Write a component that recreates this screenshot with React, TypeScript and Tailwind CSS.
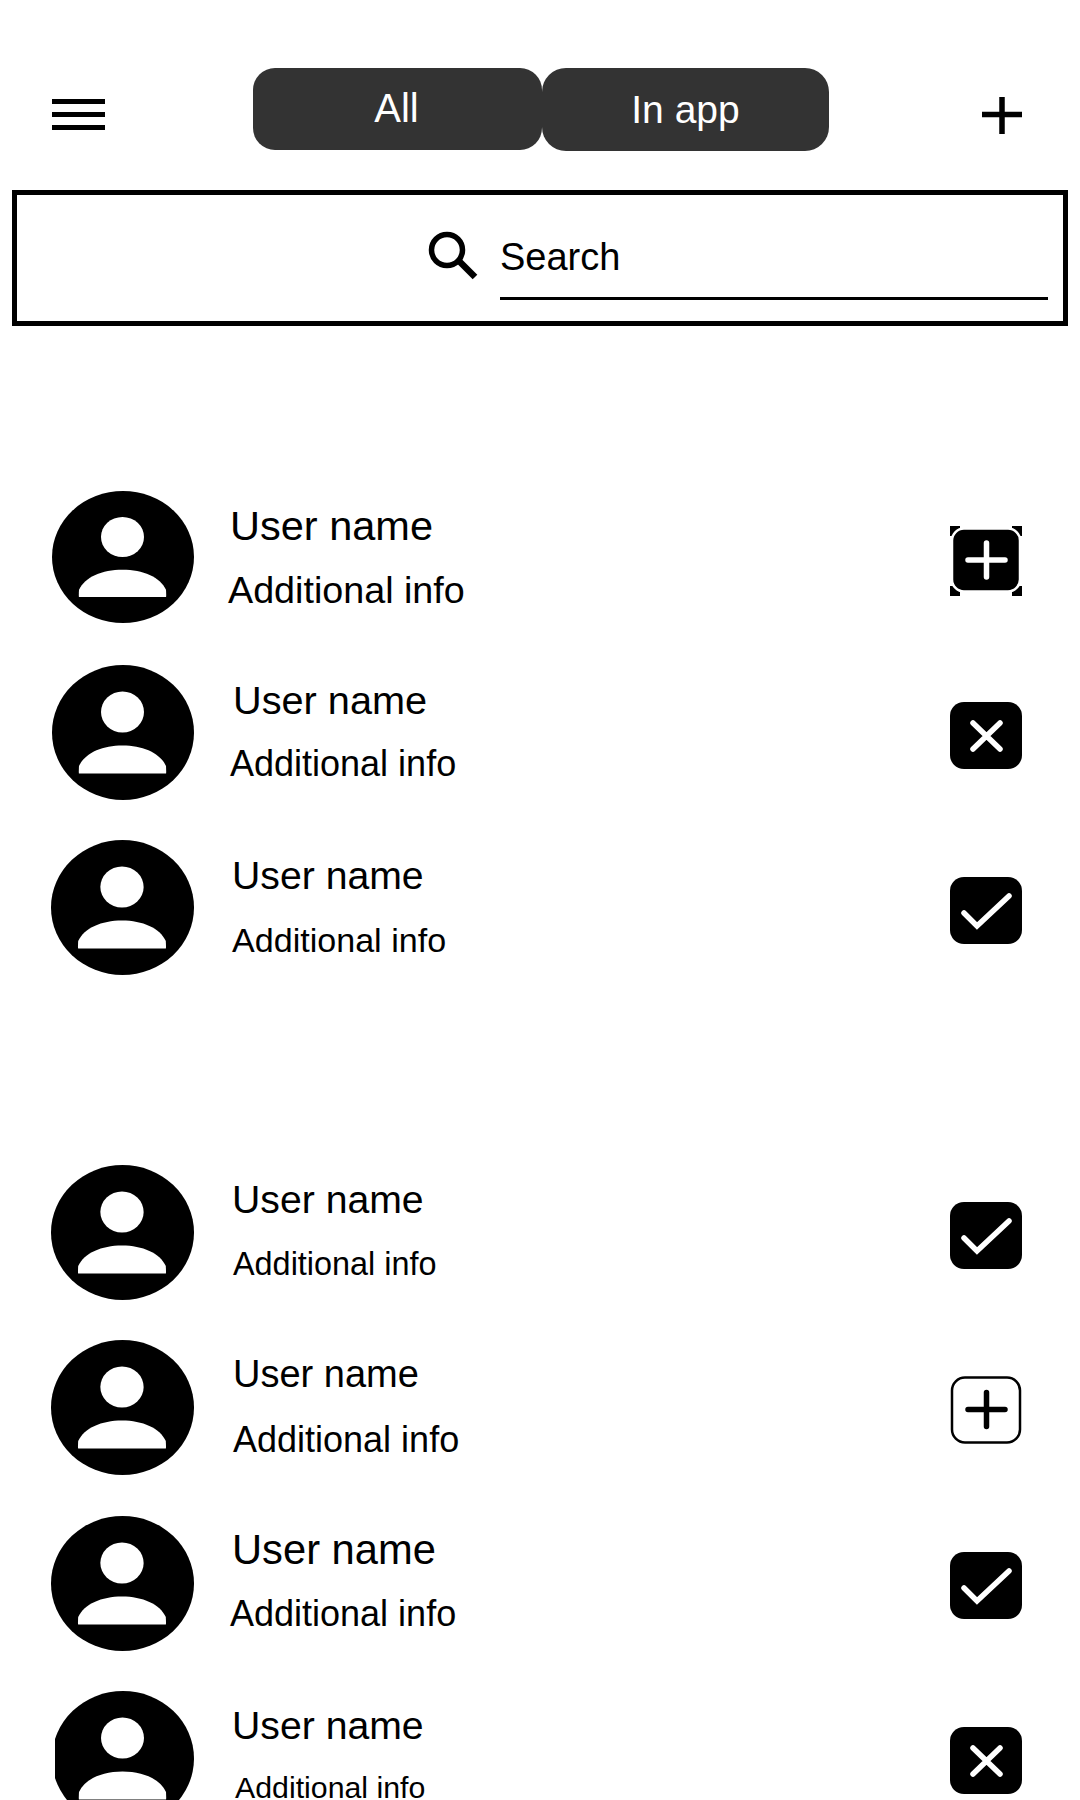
import React from "react";

type Kind = "plusInvert" | "x" | "check" | "plusOutline";

function Avatar({ h }: { h: number }) {
  return (
    <svg viewBox="0 0 142 135" preserveAspectRatio="none" width="100%" height={h} className="block">
      <ellipse cx="71" cy="67.5" rx="71" ry="67.5" fill="#000" />
      <ellipse cx="70.5" cy="47" rx="21.5" ry="20.5" fill="#fff" />
      <path d="M27 108.5 Q26.6 108.5 27 101 C33 88 50 80.5 70.5 80.5 C91 80.5 108 88 114 101 Q114.4 108.5 114 108.5 Z" fill="#fff" />
    </svg>
  );
}

function ActionIcon({ kind }: { kind: Kind }) {
  if (kind === "plusInvert") {
    return (
      <svg width="72" height="70" viewBox="0 0 72 70" className="block">
        <rect x="0" y="0" width="10" height="10" fill="#000" />
        <rect x="62" y="0" width="10" height="10" fill="#000" />
        <rect x="0" y="60" width="10" height="10" fill="#000" />
        <rect x="62" y="60" width="10" height="10" fill="#000" />
        <rect x="2" y="2.5" width="68" height="63" rx="12" fill="#000" stroke="#fff" strokeWidth="2.5" />
        <path d="M18 34H55M36.5 17V51" stroke="#fff" strokeWidth="5.5" strokeLinecap="round" fill="none" />
      </svg>
    );
  }
  if (kind === "plusOutline") {
    return (
      <svg width="72" height="68" viewBox="0 0 72 68" className="block">
        <rect x="2" y="1.5" width="68" height="65" rx="13" fill="#fff" stroke="#000" strokeWidth="2.5" />
        <path d="M18 33.5H55M36.5 16.5V50.5" stroke="#000" strokeWidth="5.5" strokeLinecap="round" fill="none" />
      </svg>
    );
  }
  return (
    <svg width="72" height="67" viewBox="0 0 72 67" className="block">
      <rect x="0" y="0" width="72" height="67" rx="14" fill="#000" />
      {kind === "x" ? (
        <path d="M23 21L50 47M50 21L23 47" stroke="#fff" strokeWidth="5.5" strokeLinecap="round" fill="none" />
      ) : (
        <path d="M14 36L27 49L59 19" stroke="#fff" strokeWidth="5.5" strokeLinecap="round" strokeLinejoin="miter" fill="none" />
      )}
    </svg>
  );
}

function Row({
  rowCls,
  avatarCls,
  avatarH,
  textCls,
  nameCls,
  infoCls,
  btnCls,
  kind,
  clip,
}: {
  rowCls: string;
  avatarCls: string;
  avatarH: number;
  textCls: string;
  nameCls: string;
  infoCls: string;
  btnCls: string;
  kind: Kind;
  clip?: boolean;
}) {
  return (
    <div className={`flex items-start ${rowCls}`}>
      <div className={`shrink-0 ${avatarCls}`}>
        {clip ? (
          <div className="w-[139px] overflow-hidden">
            <div className="w-[142px] -ml-[3px]">
              <Avatar h={avatarH} />
            </div>
          </div>
        ) : (
          <Avatar h={avatarH} />
        )}
      </div>
      <div className={`ml-[32px] flex flex-col text-black ${textCls}`}>
        <span className={`leading-none whitespace-nowrap ${nameCls}`}>User name</span>
        <span className={`leading-none whitespace-nowrap ${infoCls}`}>Additional info</span>
      </div>
      <button className={`ml-auto mr-[58px] shrink-0 ${btnCls}`}>
        <ActionIcon kind={kind} />
      </button>
    </div>
  );
}

export default function App() {
  return (
    <div className="relative h-[1800px] w-[1080px] overflow-hidden bg-white font-['Liberation_Sans',sans-serif] text-black">
      <header className="flex items-start pl-[52px] pt-[68px] mb-[39px]">
        <button className="mt-[31px] flex w-[53px] flex-col gap-[8px]">
          <span className="block h-[5px] bg-black" />
          <span className="block h-[5px] bg-black" />
          <span className="block h-[5px] bg-black" />
        </button>
        <nav className="ml-[148px] flex items-start text-white">
          <div className="h-[82px] w-[289px] rounded-[22px] bg-[#333333] pt-[20px] pr-[2px] text-center text-[40px] leading-none">All</div>
          <div className="h-[83px] w-[287px] rounded-[24px] bg-[#333333] pt-[22px] text-center text-[39px] leading-none">In app</div>
        </nav>
        <button className="ml-[153px] mt-[29px] block">
          <svg width="40" height="37" viewBox="0 0 40 37" className="block">
            <path d="M0 17.5H40M20 0V37" stroke="#000" strokeWidth="5.5" fill="none" />
          </svg>
        </button>
      </header>

      <div className="ml-[12px] flex h-[136px] w-[1056px] items-start border-[5px] border-black pl-[409px]">
        <svg width="55" height="50" viewBox="0 0 55 50" className="mt-[35px] block shrink-0">
          <circle cx="21" cy="20" r="15.5" stroke="#000" strokeWidth="5.5" fill="none" />
          <path d="M33 31L49 47" stroke="#000" strokeWidth="6.5" fill="none" />
        </svg>
        <div className="ml-[19px] mt-[43px] w-[548px] border-b-[3px] border-black pb-[21px] text-[38px] leading-none">Search</div>
      </div>

      <section className="mt-[165px]">
        <Row rowCls="h-[174px]" avatarCls="ml-[52px] w-[142px]" avatarH={132} textCls="mt-[14px]" nameCls="pl-[4px] text-[41.5px]" infoCls="mt-[25.5px] pl-[2px] text-[37.7px]" btnCls="mt-[35px]" kind="plusInvert" />
        <Row rowCls="h-[175px]" avatarCls="ml-[52px] w-[142px]" avatarH={135} textCls="mt-[16px]" nameCls="pl-[7px] text-[39.7px]" infoCls="mt-[25.5px] pl-[4px] text-[36px]" btnCls="mt-[37px]" kind="x" />
        <Row rowCls="h-[175px]" avatarCls="ml-[51px] w-[143px]" avatarH={135} textCls="mt-[16px]" nameCls="pl-[6px] text-[39.2px]" infoCls="mt-[27.8px] pl-[6px] text-[34.1px]" btnCls="mt-[37px]" kind="check" />
      </section>

      <section className="mt-[150px]">
        <Row rowCls="h-[175px]" avatarCls="ml-[51px] w-[143px]" avatarH={135} textCls="mt-[15px]" nameCls="pl-[6px] text-[39.2px]" infoCls="mt-[28.8px] pl-[7px] text-[32.4px]" btnCls="mt-[37px]" kind="check" />
        <Row rowCls="h-[176px]" avatarCls="ml-[51px] w-[143px]" avatarH={135} textCls="mt-[15px]" nameCls="pl-[7px] text-[38px]" infoCls="mt-[29px] pl-[7px] text-[36px]" btnCls="mt-[36px]" kind="plusOutline" />
        <Row rowCls="h-[175px]" avatarCls="ml-[51px] w-[143px]" avatarH={135} textCls="mt-[13px]" nameCls="pl-[6px] text-[41.7px]" infoCls="mt-[25.3px] pl-[4px] text-[36px]" btnCls="mt-[36px]" kind="check" />
        <Row rowCls="h-[175px]" avatarCls="ml-[55px] w-[139px]" avatarH={135} clip textCls="mt-[15px]" nameCls="pl-[6px] text-[39.2px]" infoCls="mt-[27.8px] pl-[9px] text-[30.3px]" btnCls="mt-[36px]" kind="x" />
      </section>
    </div>
  );
}
